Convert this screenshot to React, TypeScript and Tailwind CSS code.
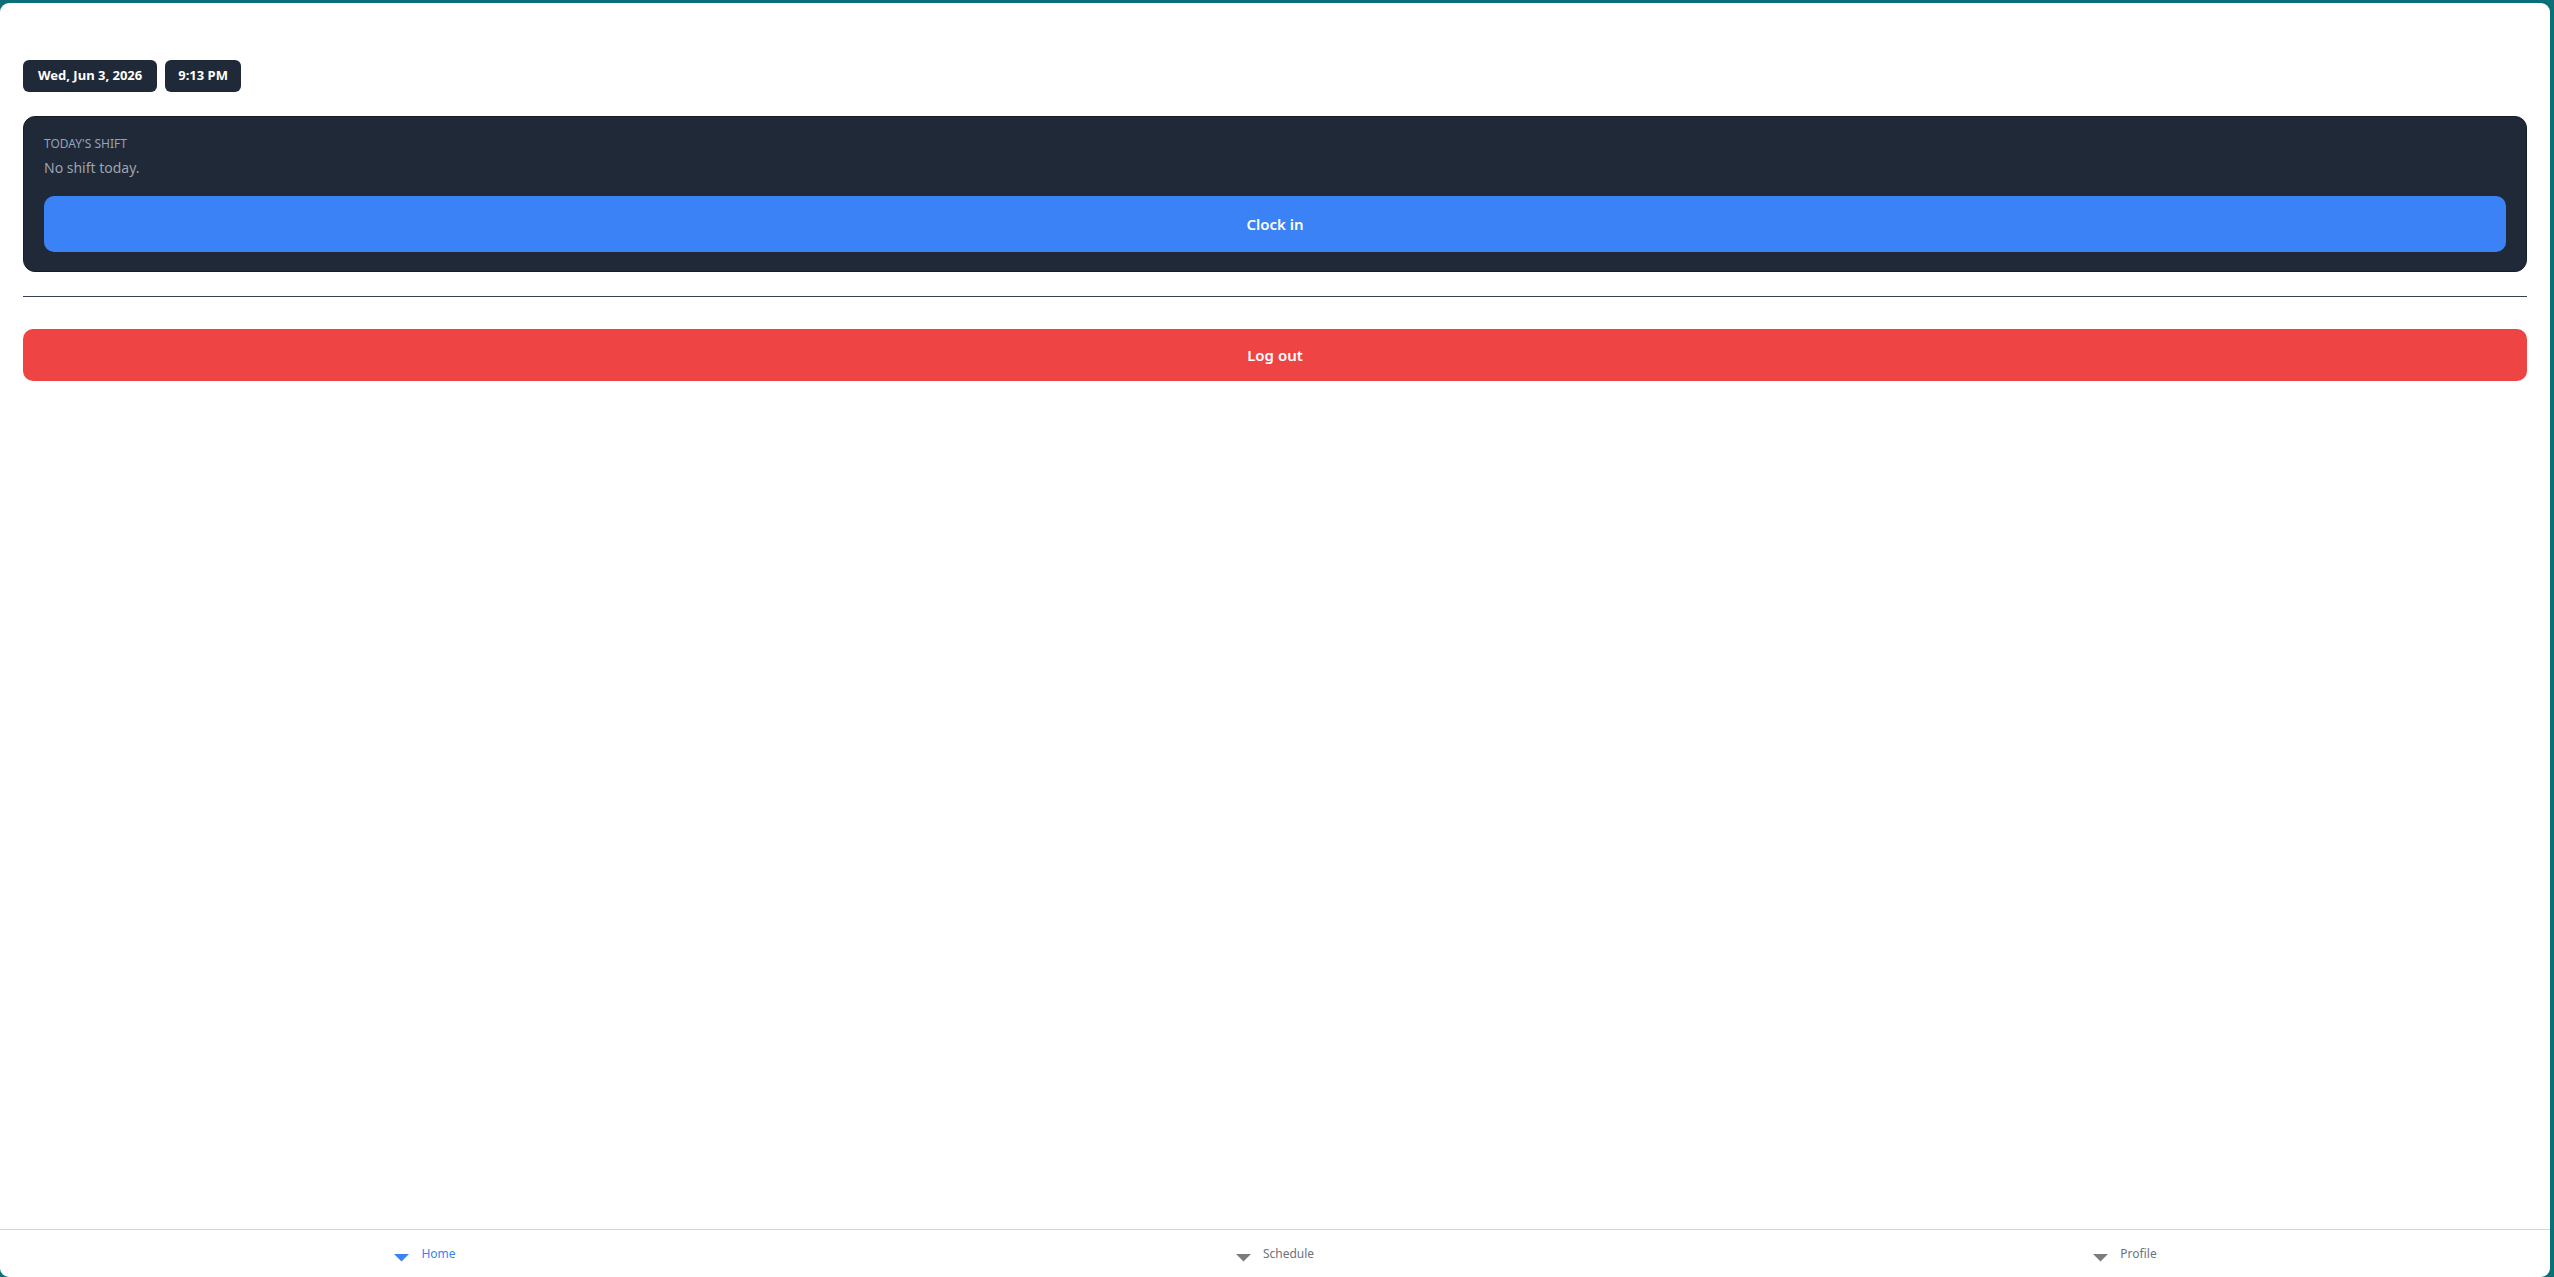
import React from 'react';

const font = { fontFamily: '"Noto Sans", "Open Sans", sans-serif' };

function Caret({ active }: { active?: boolean }) {
  return (
    <svg width="15" height="8" viewBox="0 0 15 8" className={active ? 'text-[#3b82f6]' : 'text-[#7d7d7d]'}>
      <path d="M0 0 H15 L7.5 7.5 Z" fill="currentColor" />
    </svg>
  );
}

const navItems = [
  { label: 'Home', active: true },
  { label: 'Schedule', active: false },
  { label: 'Profile', active: false },
];

export default function App() {
  return (
    <div className="h-screen w-screen bg-[#0b6f78] pt-[3px] pr-[4px] flex" style={font}>
      <div className="flex-1 bg-white rounded-[9px] flex flex-col overflow-hidden">
        {/* Main */}
        <div className="flex-1 px-[23px] pt-[57px]">
          <div className="flex gap-2">
            <span className="h-8 px-[15px] flex items-center rounded-md bg-[#1f2937] text-white text-[13px] font-bold">
              Wed, Jun 3, 2026
            </span>
            <span className="h-8 px-[13px] flex items-center rounded-md bg-[#1f2937] text-white text-[13px] font-bold">
              9:13 PM
            </span>
          </div>

          {/* Today's shift */}
          <div className="mt-6 bg-[#1f2937] rounded-xl px-5 pt-[19px] pb-[19px] border border-[#161d28]">
            <div className="text-xs leading-4 uppercase text-[#94a3b8]">Today's shift</div>
            <div className="mt-1.5 text-sm leading-5 text-[#9ca3af]">No shift today.</div>
            <button className="mt-[18px] w-full h-14 rounded-[10px] bg-[#3b82f6] text-white text-[15px] font-semibold">
              Clock in
            </button>
          </div>

          <hr className="mt-6 border-0 border-t border-[#374151]" />

          <button className="mt-8 w-full h-[52px] rounded-[10px] bg-[#ef4444] text-white text-[15px] font-semibold">
            Log out
          </button>
        </div>

        {/* Bottom nav */}
        <nav className="h-12 border-t border-[#d4d4d4] grid grid-cols-3">
          {navItems.map((item) => (
            <div key={item.label} className="flex items-center justify-center gap-3">
              <span className="mt-2">
                <Caret active={item.active} />
              </span>
              <span className={`text-xs ${item.active ? 'text-[#3b82f6]' : 'text-[#6b7280]'}`}>{item.label}</span>
            </div>
          ))}
        </nav>
      </div>
    </div>
  );
}
